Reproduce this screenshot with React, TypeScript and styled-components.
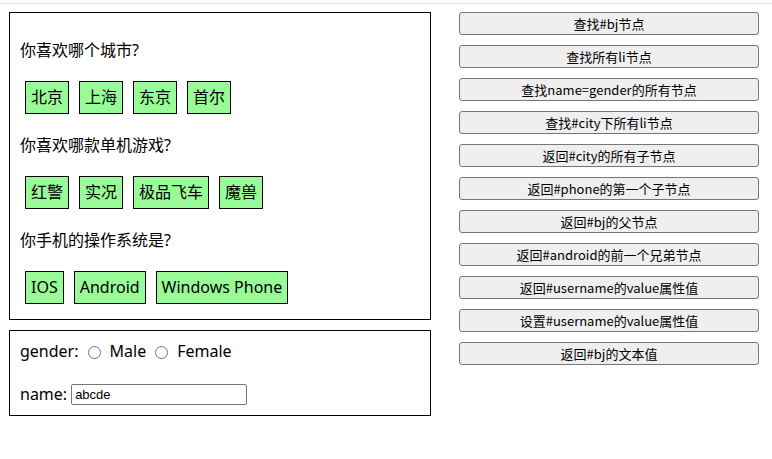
import React from "react";
import styled, { createGlobalStyle } from "styled-components";

const Global = createGlobalStyle`
  html, body { margin: 0; padding: 0; background: #fff; }
  body { font-family: "Noto Sans", "Noto Sans CJK SC", sans-serif; color: #000; }
`;

const Page = styled.div`
  padding-top: 3px;
`;

const TopRule = styled.div`
  height: 1px;
  background: #dedede;
`;

const Main = styled.div`
  display: flex;
  align-items: flex-start;
  padding: 8px 0 0 9px;
  gap: 28px;
`;

const LeftCol = styled.div`
  display: flex;
  flex-direction: column;
  gap: 10px;
  width: 422px;
`;

const Box = styled.div<{ $pt: number; $pb: number }>`
  border: 1px solid #000;
  padding: ${(p) => p.$pt}px 10px ${(p) => p.$pb}px 10px;
  display: flex;
  flex-direction: column;
`;

const Question = styled.div<{ $mt?: number }>`
  font-size: 16px;
  line-height: 21px;
  margin-top: ${(p) => p.$mt ?? 0}px;
`;

const Options = styled.ul`
  display: flex;
  gap: 10px;
  list-style: none;
  margin: 20px 0 0 5px;
  padding: 0;
`;

const Option = styled.li`
  background: #98fb98;
  border: 1px solid #000;
  padding: 5px;
  font-size: 16px;
  line-height: 21px;
`;

const FormRow = styled.div<{ $mt?: number }>`
  display: flex;
  align-items: center;
  font-size: 16px;
  line-height: 21px;
  margin-top: ${(p) => p.$mt ?? 0}px;
`;

const Radio = styled.input`
  width: 13px;
  height: 13px;
  margin: 1px 9px 0 9px;
`;

const TextInput = styled.input`
  width: 176px;
  height: 21px;
  box-sizing: border-box;
  border: 1px solid #767676;
  border-radius: 2px;
  padding: 1px 3px;
  margin-left: 4px;
  font-family: "Liberation Sans", Arial, sans-serif;
  font-size: 13px;
  color: #000;
`;

const RightCol = styled.div`
  display: flex;
  flex-direction: column;
  gap: 10px;
  width: 300px;
`;

const ActionButton = styled.button`
  height: 23px;
  background: #efefef;
  border: 1px solid #767676;
  border-radius: 3px;
  font-family: "Noto Sans CJK SC", "Noto Sans", sans-serif;
  font-size: 13px;
  line-height: 17px;
  color: #000;
  padding: 0;
`;

const groups = [
  { q: "你喜欢哪个城市?", items: ["北京", "上海", "东京", "首尔"] },
  { q: "你喜欢哪款单机游戏?", items: ["红警", "实况", "极品飞车", "魔兽"] },
  { q: "你手机的操作系统是?", items: ["IOS", "Android", "Windows Phone"] },
];

const actions = [
  "查找#bj节点",
  "查找所有li节点",
  "查找name=gender的所有节点",
  "查找#city下所有li节点",
  "返回#city的所有子节点",
  "返回#phone的第一个子节点",
  "返回#bj的父节点",
  "返回#android的前一个兄弟节点",
  "返回#username的value属性值",
  "设置#username的value属性值",
  "返回#bj的文本值",
];

export default function App() {
  return (
    <Page>
      <Global />
      <TopRule />
      <Main>
        <LeftCol>
          <Box $pt={27} $pb={15}>
            {groups.map((g, i) => (
              <React.Fragment key={g.q}>
                <Question $mt={i === 0 ? 0 : 21}>{g.q}</Question>
                <Options>
                  {g.items.map((it) => (
                    <Option key={it}>{it}</Option>
                  ))}
                </Options>
              </React.Fragment>
            ))}
          </Box>
          <Box $pt={10} $pb={10}>
            <FormRow>
              gender:
              <Radio type="radio" name="gender" value="male" />
              Male
              <Radio type="radio" name="gender" value="female" />
              Female
            </FormRow>
            <FormRow $mt={22}>
              name:
              <TextInput type="text" defaultValue="abcde" />
            </FormRow>
          </Box>
        </LeftCol>
        <RightCol>
          {actions.map((a) => (
            <ActionButton key={a}>{a}</ActionButton>
          ))}
        </RightCol>
      </Main>
    </Page>
  );
}
